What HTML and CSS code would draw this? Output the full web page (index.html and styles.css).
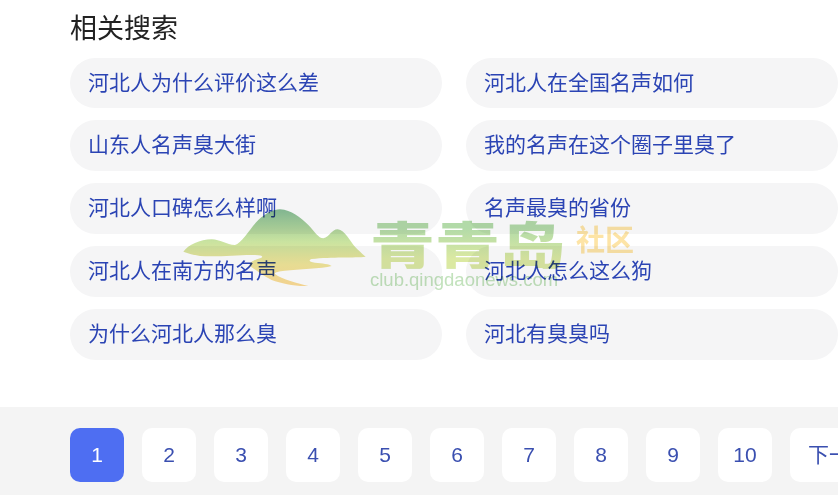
FILE: index.html

```html
<!DOCTYPE html>
<html lang="zh-CN">
<head>
    <meta charset="UTF-8">
    <meta name="viewport" content="width=device-width, initial-scale=1.0">
    <title>相关搜索</title>
    <link rel="stylesheet" href="styles.css">
</head>
<body>
    <div class="related">
        <h2 class="related-title">相关搜索</h2>
        <div class="related-list">
            <a class="related-item">河北人为什么评价这么差</a>
            <a class="related-item">河北人在全国名声如何</a>
            <a class="related-item">山东人名声臭大街</a>
            <a class="related-item">我的名声在这个圈子里臭了</a>
            <a class="related-item">河北人口碑怎么样啊</a>
            <a class="related-item">名声最臭的省份</a>
            <a class="related-item">河北人在南方的名声</a>
            <a class="related-item">河北人怎么这么狗</a>
            <a class="related-item">为什么河北人那么臭</a>
            <a class="related-item">河北有臭臭吗</a>
        </div>
    </div>
    <div class="pager">
        <a class="page active">1</a>
        <a class="page">2</a>
        <a class="page">3</a>
        <a class="page">4</a>
        <a class="page">5</a>
        <a class="page">6</a>
        <a class="page">7</a>
        <a class="page">8</a>
        <a class="page">9</a>
        <a class="page">10</a>
        <a class="page next">下一页</a>
    </div>

    <!-- watermark over the page -->
    <div class="watermark">
        <svg class="wm-hill" width="200" height="95" viewBox="0 0 600 285">
            <defs>
                <linearGradient id="hill" x1="0" y1="0" x2="0" y2="1">
                    <stop offset="0" stop-color="#86bd95"/>
                    <stop offset="0.42" stop-color="#c9e3a0"/>
                    <stop offset="0.72" stop-color="#f1e598"/>
                    <stop offset="1" stop-color="#fcdb94"/>
                </linearGradient>
            </defs>
            <path fill="url(#hill)" d="M25 155 C40 135 75 118 110 118 C135 118 155 135 180 135 C200 130 225 85 250 60 C275 38 295 28 315 28 C350 30 375 52 400 75 C420 95 430 115 445 115 C465 110 470 88 488 88 C510 90 525 125 540 140 C550 150 562 162 572 170 C540 174 470 170 410 177 C400 180 402 186 420 188 C440 190 465 192 470 198 C440 206 370 208 330 212 C310 214 296 218 300 222 C320 238 370 250 400 258 C360 260 320 250 290 240 C265 228 245 212 228 200 C215 192 235 180 255 175 C268 170 262 166 240 165 C200 163 130 172 75 168 C55 165 40 160 25 155 Z"/>
        </svg>
        <div class="wm-text">
            <div class="wm-name">
                <span class="wm-qd">青青岛</span>
                <span class="wm-sq">社区</span>
            </div>
            <div class="wm-url">club.qingdaonews.com</div>
        </div>
    </div>
</body>
</html>
```

FILE: styles.css

```css
body {
    margin: 0;
    height: 495px;
    overflow: hidden;
    position: relative;
    background: #fff;
    font-family: "Noto Sans CJK SC", "Liberation Sans", sans-serif;
}
.related {
    padding: 8px 0 0 70px;
    height: 399px;
    box-sizing: border-box;
}
.related-title {
    margin: 0 0 11.6px;
    font-size: 27px;
    line-height: 38px;
    font-weight: 400;
    color: #222;
}
.related-list {
    display: grid;
    grid-template-columns: 372px 372px;
    column-gap: 24px;
    row-gap: 12px;
}
.related-item {
    height: 50.8px;
    line-height: 47px;
    padding: 0 18px;
    border-radius: 26px;
    background: #f5f5f6;
    color: #2b44b4;
    font-size: 21px;
}
.pager {
    display: flex;
    gap: 18px;
    height: 88px;
    margin-top: 8px;
    padding: 21px 0 0 70px;
    background: #f4f4f4;
}
.page {
    flex: none;
    width: 54px;
    height: 54px;
    line-height: 54px;
    text-align: center;
    border-radius: 10px;
    background: #fff;
    color: #3a4fb0;
    font-family: "Liberation Sans", "Noto Sans CJK SC", sans-serif;
    font-size: 21px;
}
.page.active {
    background: #4e6ef2;
    color: #fff;
}
.page.next {
    width: auto;
    padding: 0 18px;
}
.watermark {
    position: absolute;
    left: 175px;
    top: 200px;
    display: flex;
    mix-blend-mode: multiply;
}
.wm-hill {
    flex: none;
}
.wm-text {
    margin: 20px 0 0 -5px;
}
.wm-name {
    display: flex;
    height: 47px;
}
.wm-qd {
    height: 65px;
    margin-top: -9px;
    font-size: 65px;
    line-height: 65px;
    font-weight: 900;
    white-space: nowrap;
    transform: scaleY(0.78);
    background: linear-gradient(#b2daa8 20%, #dbe9a2 80%);
    -webkit-background-clip: text;
    background-clip: text;
    color: transparent;
}
.wm-sq {
    margin: 3px 0 0 11px;
    font-size: 29px;
    line-height: 30px;
    font-weight: 700;
    color: #fde4a6;
}
.wm-url {
    margin-top: 3px;
    font-family: "Liberation Sans", sans-serif;
    font-size: 18.5px;
    line-height: 20px;
    color: #c2e2bc;
}
```
